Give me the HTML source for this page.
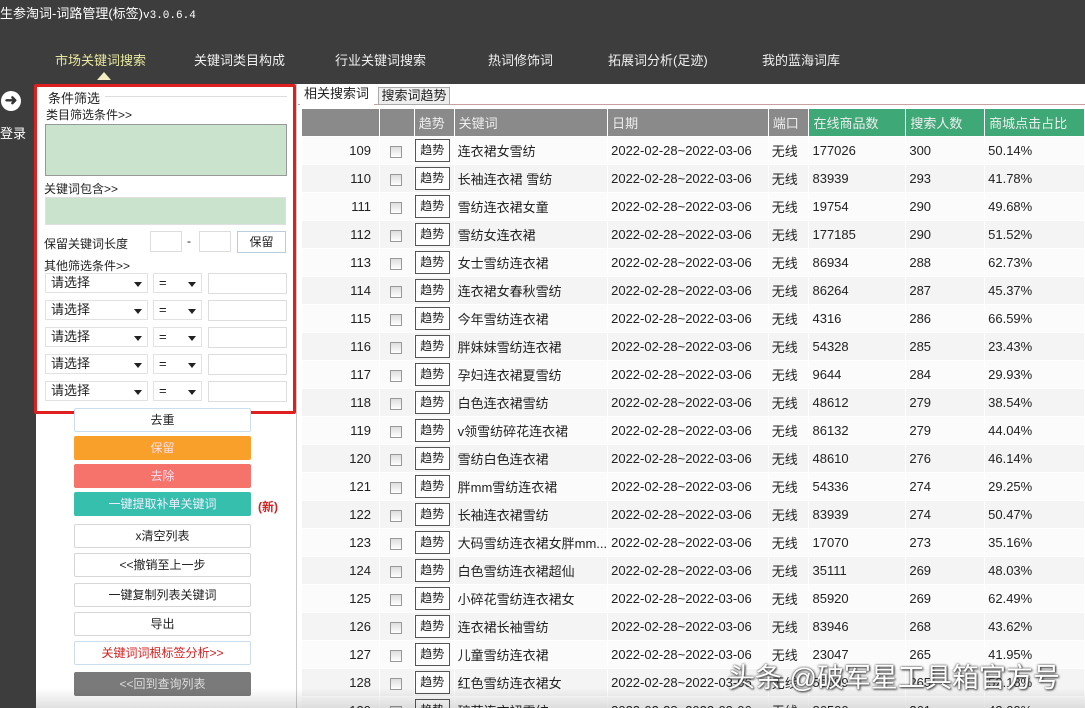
<!DOCTYPE html>
<html style="width:1085px;height:708px;overflow:hidden"><head><meta charset="utf-8"><style>
*{margin:0;padding:0;box-sizing:border-box}
body{width:1085px;height:708px;overflow:hidden;background:#3d3d3d;font-family:"Liberation Sans","Noto Sans CJK SC",sans-serif;position:relative;font-size:12px;color:#222}
.a{position:absolute}
.nav{color:#f0f0f0;font-size:13px;top:50px}
.lbl{font-size:12px;color:#222}
.sel{position:absolute;height:20px;border:1px solid #e2e2e2;background:#fff;font-size:13px;padding-left:5px;line-height:18px}
.sel:after{content:"";position:absolute;right:5px;top:8px;border-left:4px solid transparent;border-right:4px solid transparent;border-top:5px solid #222}
.btn{position:absolute;left:74px;width:177px;height:24px;border:1px solid #d6d6d6;border-radius:2px;text-align:center;line-height:22px;font-size:12px;background:#fff;color:#222}
table{border-collapse:collapse;position:absolute;left:301px;top:108px;font-size:13px;table-layout:fixed}
td{height:28px;border:1px solid #fff;padding:0 0 0 3px;background:#f4f4f4;white-space:nowrap;overflow:hidden}
tr:nth-child(even) td{background:#fbfbfb}
th{height:28px;border:1px solid #fff;background:#8a8a8a;color:#eee;font-weight:normal;text-align:left;padding-left:4px}
th.g{background:#3fa877}
.n{text-align:right;padding-right:8px}
.cb{display:inline-block;width:12px;height:12px;border:1px solid #999;background:linear-gradient(#ddd,#fff);vertical-align:middle;margin-left:7px}
.tb{display:inline-block;width:35px;height:23px;border:1px solid #555;background:#fff;text-align:center;line-height:21px;font-size:12px}
</style></head><body>
<div class="a" style="left:0;top:3px;color:#fff;font-size:13px">生参淘词-词路管理(标签)<span style="font-family:'Liberation Mono';font-size:11px">v3.0.6.4</span></div>
<div class="a nav" style="left:55px;color:#e8e8a0">市场关键词搜索</div>
<div class="a" style="left:97px;top:72px;border-left:7px solid transparent;border-right:7px solid transparent;border-bottom:8px solid #f3efc0"></div>
<div class="a nav" style="left:194px">关键词类目构成</div>
<div class="a nav" style="left:335px">行业关键词搜索</div>
<div class="a nav" style="left:488px">热词修饰词</div>
<div class="a nav" style="left:608px">拓展词分析(足迹)</div>
<div class="a nav" style="left:762px">我的蓝海词库</div>
<div class="a" style="left:1px;top:91px;width:20px;height:20px;border-radius:50%;background:#fff;color:#333;font-size:15px;font-weight:bold;text-align:center;line-height:19px">➜</div>
<div class="a" style="left:0;top:123px;color:#fff;font-size:13px">登录</div>
<div class="a" style="left:36px;top:84px;width:261px;height:624px;background:#fff;border-right:1px solid #ccc"></div>
<div class="a" style="left:297px;top:84px;width:788px;height:624px;background:#fff"></div>
<div class="a" style="left:34px;top:84px;width:262px;height:330px;border:3px solid #e02020;border-radius:2px"></div>
<div class="a lbl" style="left:48px;top:88px;font-size:13px">条件筛选</div>
<div class="a" style="left:105px;top:96px;width:182px;border-top:1px solid #ddd"></div>
<div class="a lbl" style="left:46px;top:106px">类目筛选条件&gt;&gt;</div>
<div class="a" style="left:45px;top:124px;width:242px;height:52px;background:#c9e3cc;border:1px solid #999"></div>
<div class="a lbl" style="left:44px;top:180px">关键词包含&gt;&gt;</div>
<div class="a" style="left:45px;top:197px;width:241px;height:28px;background:#c9e3cc;border:1px solid #e0e0e0"></div>
<div class="a lbl" style="left:44px;top:235px">保留关键词长度</div>
<div class="a" style="left:150px;top:231px;width:32px;height:21px;border:1px solid #ddd"></div>
<div class="a" style="left:187px;top:234px">-</div>
<div class="a" style="left:199px;top:231px;width:32px;height:21px;border:1px solid #ddd"></div>
<div class="a" style="left:237px;top:231px;width:49px;height:22px;border:1px solid #bcd;text-align:center;line-height:20px;font-size:12px">保留</div>
<div class="a lbl" style="left:44px;top:257px">其他筛选条件&gt;&gt;</div>
<div class="sel" style="left:45px;top:273px;width:103px">请选择</div><div class="sel" style="left:153px;top:273px;width:49px">=</div><div class="a" style="left:208px;top:273px;width:79px;height:21px;border:1px solid #ddd"></div>
<div class="sel" style="left:45px;top:300px;width:103px">请选择</div><div class="sel" style="left:153px;top:300px;width:49px">=</div><div class="a" style="left:208px;top:300px;width:79px;height:21px;border:1px solid #ddd"></div>
<div class="sel" style="left:45px;top:327px;width:103px">请选择</div><div class="sel" style="left:153px;top:327px;width:49px">=</div><div class="a" style="left:208px;top:327px;width:79px;height:21px;border:1px solid #ddd"></div>
<div class="sel" style="left:45px;top:354px;width:103px">请选择</div><div class="sel" style="left:153px;top:354px;width:49px">=</div><div class="a" style="left:208px;top:354px;width:79px;height:21px;border:1px solid #ddd"></div>
<div class="sel" style="left:45px;top:381px;width:103px">请选择</div><div class="sel" style="left:153px;top:381px;width:49px">=</div><div class="a" style="left:208px;top:381px;width:79px;height:21px;border:1px solid #ddd"></div>
<div class="btn" style="top:408px;border-color:#cde">去重</div>
<div class="btn" style="top:436px;background:#f8a02a;border-color:#f8a02a;color:#fde">保留</div>
<div class="btn" style="top:464px;background:#f6736c;border-color:#f6736c;color:#fde">去除</div>
<div class="btn" style="top:492px;background:#37bfae;border-color:#37bfae;color:#eef">一键提取补单关键词</div>
<div class="a" style="left:258px;top:498px;color:#d42020;font-weight:bold;font-size:12px">(新)</div>
<div class="btn" style="top:524px">x清空列表</div>
<div class="btn" style="top:553px">&lt;&lt;撤销至上一步</div>
<div class="btn" style="top:583px">一键复制列表关键词</div>
<div class="btn" style="top:612px">导出</div>
<div class="btn" style="top:641px;color:#d42020;border-color:#cde">关键词词根标签分析&gt;&gt;</div>
<div class="btn" style="top:672px;background:#7a7a7a;border-color:#7a7a7a;color:#ddd">&lt;&lt;回到查询列表</div>
<div class="a" style="left:298px;top:104px;width:787px;border-top:1px solid #c9a0a0"></div>
<div class="a" style="left:300px;top:85px;width:74px;height:20px;background:#fff;font-size:13px;padding-left:4px;line-height:18px">相关搜索词</div>
<div class="a" style="left:378px;top:87px;width:72px;height:18px;background:#eee;border:1px solid #aaa;font-size:13px;text-align:center;line-height:16px">搜索词趋势</div>
<table>
<colgroup><col style="width:79px"><col style="width:35px"><col style="width:40px"><col style="width:150px"><col style="width:161px"><col style="width:41px"><col style="width:98px"><col style="width:80px"><col style="width:101px"></colgroup>
<tr><th></th><th></th><th>趋势</th><th>关键词</th><th>日期</th><th>端口</th><th class="g">在线商品数</th><th class="g">搜索人数</th><th class="g">商城点击占比</th></tr>
<tr><td class="n">109</td><td><span class="cb"></span></td><td style="padding-left:0"><span class="tb">趋势</span></td><td>连衣裙女雪纺</td><td>2022-02-28~2022-03-06</td><td>无线</td><td>177026</td><td>300</td><td>50.14%</td></tr>
<tr><td class="n">110</td><td><span class="cb"></span></td><td style="padding-left:0"><span class="tb">趋势</span></td><td>长袖连衣裙 雪纺</td><td>2022-02-28~2022-03-06</td><td>无线</td><td>83939</td><td>293</td><td>41.78%</td></tr>
<tr><td class="n">111</td><td><span class="cb"></span></td><td style="padding-left:0"><span class="tb">趋势</span></td><td>雪纺连衣裙女童</td><td>2022-02-28~2022-03-06</td><td>无线</td><td>19754</td><td>290</td><td>49.68%</td></tr>
<tr><td class="n">112</td><td><span class="cb"></span></td><td style="padding-left:0"><span class="tb">趋势</span></td><td>雪纺女连衣裙</td><td>2022-02-28~2022-03-06</td><td>无线</td><td>177185</td><td>290</td><td>51.52%</td></tr>
<tr><td class="n">113</td><td><span class="cb"></span></td><td style="padding-left:0"><span class="tb">趋势</span></td><td>女士雪纺连衣裙</td><td>2022-02-28~2022-03-06</td><td>无线</td><td>86934</td><td>288</td><td>62.73%</td></tr>
<tr><td class="n">114</td><td><span class="cb"></span></td><td style="padding-left:0"><span class="tb">趋势</span></td><td>连衣裙女春秋雪纺</td><td>2022-02-28~2022-03-06</td><td>无线</td><td>86264</td><td>287</td><td>45.37%</td></tr>
<tr><td class="n">115</td><td><span class="cb"></span></td><td style="padding-left:0"><span class="tb">趋势</span></td><td>今年雪纺连衣裙</td><td>2022-02-28~2022-03-06</td><td>无线</td><td>4316</td><td>286</td><td>66.59%</td></tr>
<tr><td class="n">116</td><td><span class="cb"></span></td><td style="padding-left:0"><span class="tb">趋势</span></td><td>胖妹妹雪纺连衣裙</td><td>2022-02-28~2022-03-06</td><td>无线</td><td>54328</td><td>285</td><td>23.43%</td></tr>
<tr><td class="n">117</td><td><span class="cb"></span></td><td style="padding-left:0"><span class="tb">趋势</span></td><td>孕妇连衣裙夏雪纺</td><td>2022-02-28~2022-03-06</td><td>无线</td><td>9644</td><td>284</td><td>29.93%</td></tr>
<tr><td class="n">118</td><td><span class="cb"></span></td><td style="padding-left:0"><span class="tb">趋势</span></td><td>白色连衣裙雪纺</td><td>2022-02-28~2022-03-06</td><td>无线</td><td>48612</td><td>279</td><td>38.54%</td></tr>
<tr><td class="n">119</td><td><span class="cb"></span></td><td style="padding-left:0"><span class="tb">趋势</span></td><td>v领雪纺碎花连衣裙</td><td>2022-02-28~2022-03-06</td><td>无线</td><td>86132</td><td>279</td><td>44.04%</td></tr>
<tr><td class="n">120</td><td><span class="cb"></span></td><td style="padding-left:0"><span class="tb">趋势</span></td><td>雪纺白色连衣裙</td><td>2022-02-28~2022-03-06</td><td>无线</td><td>48610</td><td>276</td><td>46.14%</td></tr>
<tr><td class="n">121</td><td><span class="cb"></span></td><td style="padding-left:0"><span class="tb">趋势</span></td><td>胖mm雪纺连衣裙</td><td>2022-02-28~2022-03-06</td><td>无线</td><td>54336</td><td>274</td><td>29.25%</td></tr>
<tr><td class="n">122</td><td><span class="cb"></span></td><td style="padding-left:0"><span class="tb">趋势</span></td><td>长袖连衣裙雪纺</td><td>2022-02-28~2022-03-06</td><td>无线</td><td>83939</td><td>274</td><td>50.47%</td></tr>
<tr><td class="n">123</td><td><span class="cb"></span></td><td style="padding-left:0"><span class="tb">趋势</span></td><td>大码雪纺连衣裙女胖mm...</td><td>2022-02-28~2022-03-06</td><td>无线</td><td>17070</td><td>273</td><td>35.16%</td></tr>
<tr><td class="n">124</td><td><span class="cb"></span></td><td style="padding-left:0"><span class="tb">趋势</span></td><td>白色雪纺连衣裙超仙</td><td>2022-02-28~2022-03-06</td><td>无线</td><td>35111</td><td>269</td><td>48.03%</td></tr>
<tr><td class="n">125</td><td><span class="cb"></span></td><td style="padding-left:0"><span class="tb">趋势</span></td><td>小碎花雪纺连衣裙女</td><td>2022-02-28~2022-03-06</td><td>无线</td><td>85920</td><td>269</td><td>62.49%</td></tr>
<tr><td class="n">126</td><td><span class="cb"></span></td><td style="padding-left:0"><span class="tb">趋势</span></td><td>连衣裙长袖雪纺</td><td>2022-02-28~2022-03-06</td><td>无线</td><td>83946</td><td>268</td><td>43.62%</td></tr>
<tr><td class="n">127</td><td><span class="cb"></span></td><td style="padding-left:0"><span class="tb">趋势</span></td><td>儿童雪纺连衣裙</td><td>2022-02-28~2022-03-06</td><td>无线</td><td>23047</td><td>265</td><td>41.95%</td></tr>
<tr><td class="n">128</td><td><span class="cb"></span></td><td style="padding-left:0"><span class="tb">趋势</span></td><td>红色雪纺连衣裙女</td><td>2022-02-28~2022-03-06</td><td>无线</td><td>55599</td><td>265</td><td>52.18%</td></tr>
<tr><td class="n">129</td><td><span class="cb"></span></td><td style="padding-left:0"><span class="tb">趋势</span></td><td>碎花连衣裙雪纺</td><td>2022-02-28~2022-03-06</td><td>无线</td><td>86500</td><td>261</td><td>42.00%</td></tr>
</table>
<div class="a" style="left:36px;top:688px;width:1049px;height:20px;background:linear-gradient(rgba(0,0,0,0),rgba(0,0,0,.12))"></div>
<div class="a" style="left:728px;top:656px;color:#fff;font-size:27px;text-shadow:0 0 2px #333,1px 1px 2px #333;white-space:nowrap">头条 @破军星工具箱官方号</div>
</body></html>
